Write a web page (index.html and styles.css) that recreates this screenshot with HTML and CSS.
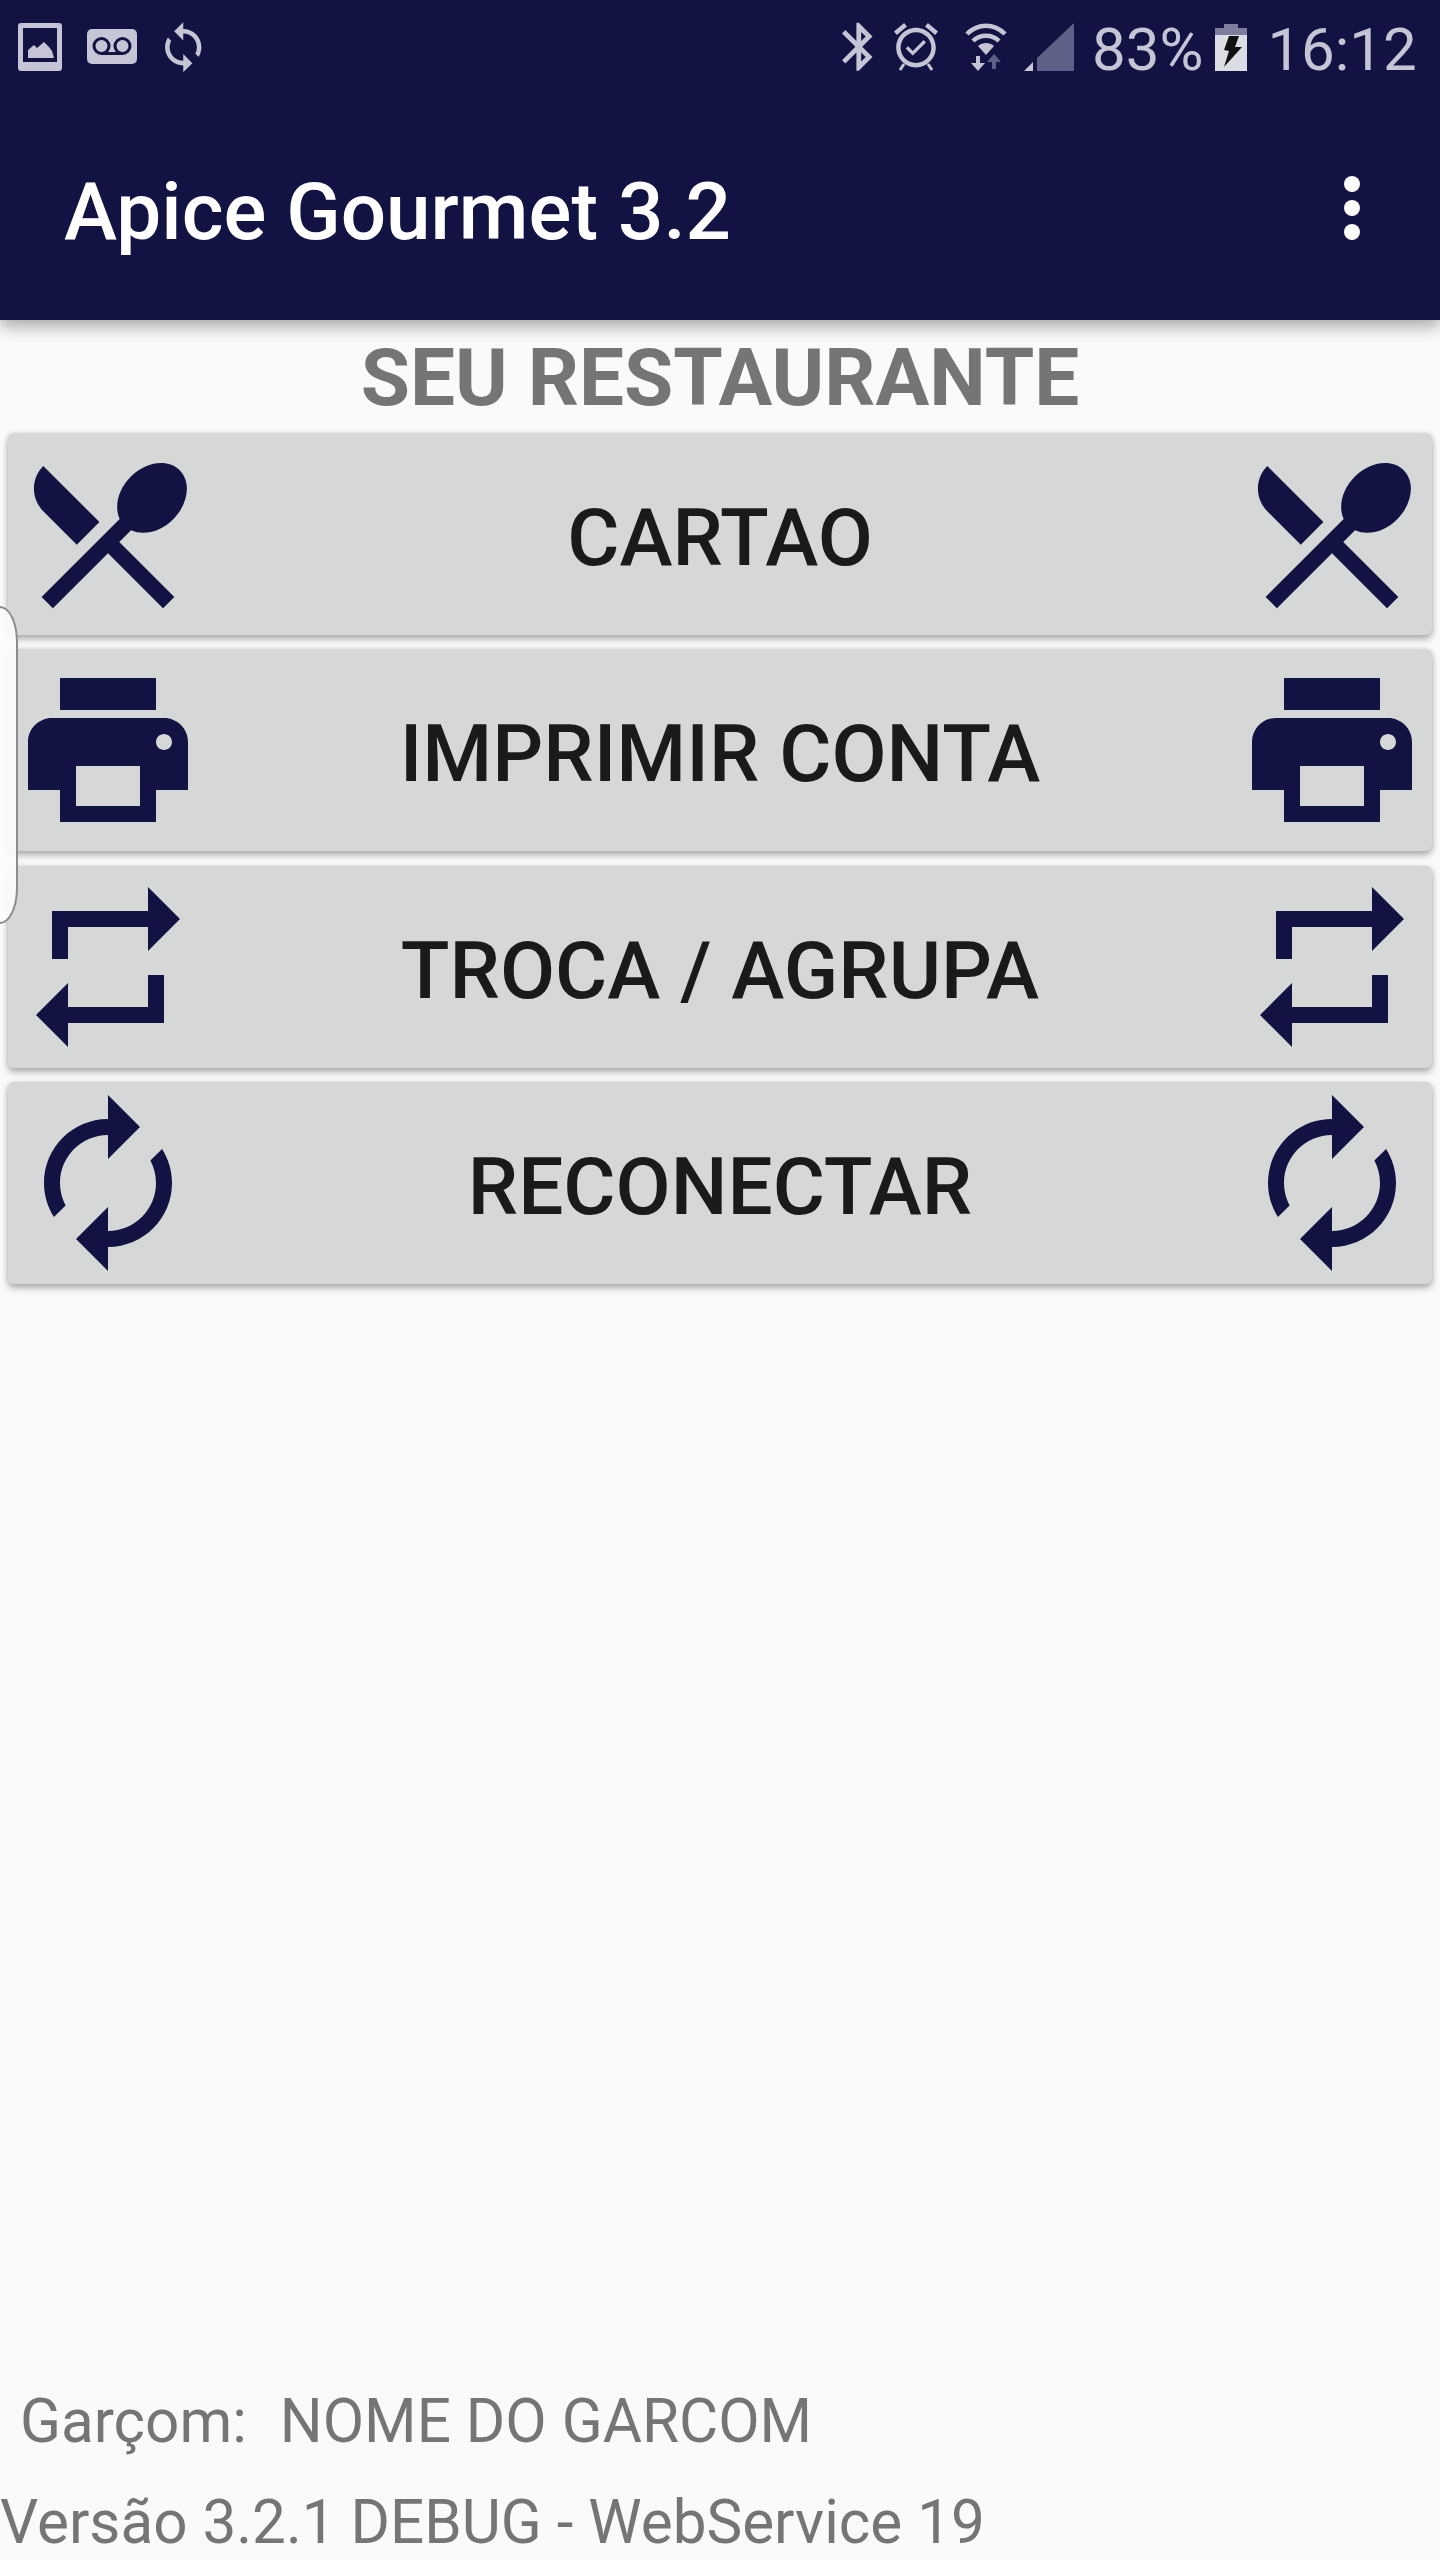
FILE: index.html
```html
<!DOCTYPE html>
<html lang="pt-BR">
<head>
  <meta charset="UTF-8">
  <meta name="viewport" content="width=device-width, initial-scale=1.0">
  <title>Apice Gourmet 3.2</title>
  <link rel="stylesheet" href="styles.css">
</head>
<body>
  <div class="page">
    <!-- barra superior -->
    <header class="header">
      <div class="status">
        <svg class="st-image" width="44" height="48" viewBox="18 23 44 48">
          <path fill="#c5c5d6" fill-rule="evenodd" d="M21 23h38a3 3 0 0 1 3 3v42a3 3 0 0 1-3 3H21a3 3 0 0 1-3-3V26a3 3 0 0 1 3-3zm2 5v34h34V28zm5 30v-8l6-5 3 3 7-6 5 5 3 4 2 7z"/>
        </svg>
        <svg class="st-voicemail" width="50" height="48" viewBox="87 23 50 48">
          <rect x="87" y="29" width="50" height="35" rx="5" fill="#c5c5d6"/>
          <g fill="none" stroke="#121342" stroke-width="3">
            <circle cx="101.500" cy="46" r="7.500"/>
            <circle cx="122.500" cy="46" r="7.500"/>
            <path d="M101.500 53.500h21"/>
          </g>
        </svg>
        <svg class="st-sync" width="40" height="54" viewBox="164 20 40 54">
          <g transform="translate(156 20) scale(2.27)">
            <path fill="#c5c5d6" d="M12 4V1L8 5l4 4V6c3.310 0 6 2.690 6 6 0 1.010-.25 1.970-.7 2.800l1.460 1.460C19.540 15.030 20 13.570 20 12c0-4.420-3.580-8-8-8zm0 14c-3.310 0-6-2.690-6-6 0-1.010.25-1.970.7-2.800L5.240 7.740C4.460 8.970 4 10.430 4 12c0 4.420 3.580 8 8 8v3l4-4-4-4v3z"/>
          </g>
        </svg>

        <svg class="st-bluetooth" width="36" height="52" viewBox="840 21 36 52">
          <g transform="translate(830 18) scale(2.4)">
            <path fill="#c5c5d6" d="M17.710 7.710L12 2h-1v7.590L6.410 5 5 6.410 10.590 12 5 17.590 6.410 19 11 14.410V22h1l5.710-5.710-4.300-4.290 4.300-4.290zM13 5.830l1.880 1.880L13 9.590V5.830zm1.880 10.460L13 18.170v-3.760l1.880 1.880z"/>
          </g>
        </svg>
        <svg class="st-alarm" width="46" height="52" viewBox="893 21 46 52">
          <g transform="translate(889.600 19) scale(2.200)">
            <path fill="#c5c5d6" d="M22 5.720l-4.600-3.860-1.290 1.530 4.600 3.860L22 5.720zM7.880 3.390L6.600 1.860 2 5.710l1.290 1.530 4.590-3.850zM12 4c-4.970 0-9 4.030-9 9s4.020 9 9 9c4.970 0 9-4.030 9-9s-4.030-9-9-9zm0 16c-3.870 0-7-3.130-7-7s3.130-7 7-7 7 3.130 7 7-3.130 7-7 7zm-1.460-5.470L8.410 12.400l-1.060 1.060 3.180 3.180 6-6-1.060-1.060-4.930 4.950z"/>
          </g>
          <path stroke="#c5c5d6" stroke-width="3" d="M904 64l-4 6M928 64l4 6"/>
        </svg>
        <svg class="st-wifi" width="44" height="52" viewBox="965 21 44 52">
          <g fill="none" stroke="#c5c5d6" stroke-width="4.500">
            <path d="M967 34c11-11 27-11 38 0"/>
            <path d="M973 41c7-7 19-7 26 0"/>
          </g>
          <path fill="#c5c5d6" d="M978 46c4-4 12-4 16 0l-8 9z"/>
          <path fill="#c5c5d6" d="M976 56h4v7h5l-7 8-7-8h5z"/>
          <path fill="#5f6088" d="M992 69v-7h-5l7-8 7 8h-5v7z"/>
        </svg>
        <svg class="st-signal" width="50" height="52" viewBox="1024 21 50 52">
          <path fill="#c5c5d6" d="M1024 71l9-9v9z"/>
          <path fill="#5f6088" d="M1037 58l37-35v48h-37z"/>
        </svg>
        <span class="st-text st-percent">83%</span>
        <svg class="st-battery" width="32" height="52" viewBox="1217 21 32 52">
          <path fill="#7d7d9c" d="M1226 24h14v4h9v7h-32v-7h9z"/>
          <path fill="#dcdce4" d="M1217 35h32v36h-32z"/>
          <path fill="#111" d="M1231 36h10l-4 11h7l-18 20 5-16-5-1z"/>
        </svg>
        <span class="st-text st-time">16:12</span>
      </div>

      <div class="appbar">
        <h1 class="title">Apice Gourmet 3.2</h1>
        <div class="overflow">
          <div class="dot"></div>
          <div class="dot"></div>
          <div class="dot"></div>
        </div>
      </div>
    </header>

    <h2 class="restaurant">SEU RESTAURANTE</h2>

    <!-- menu principal -->
    <div class="menu">
      <div class="btn">
        <svg class="btn-icon" viewBox="0 0 24 24"><path d="M8.100 13.340l2.830-2.830L3.910 3.500c-1.560 1.560-1.560 4.090 0 5.660l4.190 4.180zm6.780-1.810c1.530.71 3.680.21 5.270-1.380 1.910-1.910 2.280-4.650.81-6.120-1.460-1.460-4.200-1.100-6.120.81-1.590 1.590-2.090 3.740-1.380 5.270L3.700 19.870l1.410 1.410L12 14.410l6.880 6.880 1.410-1.410L13.410 13l1.470-1.470z"/></svg>
        <span class="btn-label">CARTAO</span>
        <svg class="btn-icon" viewBox="0 0 24 24"><path d="M8.100 13.340l2.830-2.830L3.910 3.500c-1.560 1.560-1.560 4.090 0 5.660l4.190 4.180zm6.780-1.810c1.530.71 3.680.21 5.270-1.380 1.910-1.910 2.280-4.650.81-6.120-1.460-1.460-4.200-1.100-6.120.81-1.590 1.590-2.090 3.740-1.380 5.270L3.700 19.870l1.410 1.410L12 14.410l6.880 6.880 1.410-1.410L13.410 13l1.470-1.470z"/></svg>
      </div>
      <div class="btn">
        <svg class="btn-icon" viewBox="0 0 24 24"><path d="M19 8H5c-1.660 0-3 1.340-3 3v6h4v4h12v-4h4v-6c0-1.660-1.340-3-3-3zm-3 11H8v-5h8v5zm3-7c-.55 0-1-.45-1-1s.45-1 1-1 1 .45 1 1-.45 1-1 1zm-1-9H6v4h12V3z"/></svg>
        <span class="btn-label">IMPRIMIR CONTA</span>
        <svg class="btn-icon" viewBox="0 0 24 24"><path d="M19 8H5c-1.660 0-3 1.340-3 3v6h4v4h12v-4h4v-6c0-1.660-1.340-3-3-3zm-3 11H8v-5h8v5zm3-7c-.55 0-1-.45-1-1s.45-1 1-1 1 .45 1 1-.45 1-1 1zm-1-9H6v4h12V3z"/></svg>
      </div>
      <div class="btn">
        <svg class="btn-icon" viewBox="0 0 24 24"><path d="M7 7h10v3l4-4-4-4v3H5v6h2V7zm10 10H7v-3l-4 4 4 4v-3h12v-6h-2v4z"/></svg>
        <span class="btn-label">TROCA / AGRUPA</span>
        <svg class="btn-icon" viewBox="0 0 24 24"><path d="M7 7h10v3l4-4-4-4v3H5v6h2V7zm10 10H7v-3l-4 4 4 4v-3h12v-6h-2v4z"/></svg>
      </div>
      <div class="btn">
        <svg class="btn-icon" viewBox="0 0 24 24"><path d="M12 6v3l4-4-4-4v3c-4.420 0-8 3.580-8 8 0 1.570.46 3.030 1.240 4.260L6.700 14.800c-.45-.83-.7-1.790-.7-2.800 0-3.310 2.690-6 6-6zm6.760 1.740L17.300 9.200c.44.84.7 1.790.7 2.800 0 3.310-2.690 6-6 6v-3l-4 4 4 4v-3c4.420 0 8-3.580 8-8 0-1.570-.46-3.030-1.240-4.260z"/></svg>
        <span class="btn-label">RECONECTAR</span>
        <svg class="btn-icon" viewBox="0 0 24 24"><path d="M12 6v3l4-4-4-4v3c-4.420 0-8 3.580-8 8 0 1.570.46 3.030 1.240 4.260L6.700 14.800c-.45-.83-.7-1.790-.7-2.800 0-3.310 2.690-6 6-6zm6.760 1.740L17.300 9.200c.44.84.7 1.790.7 2.800 0 3.310-2.690 6-6 6v-3l-4 4 4 4v-3c4.420 0 8-3.580 8-8 0-1.570-.46-3.030-1.240-4.260z"/></svg>
      </div>
    </div>

    <!-- rodape -->
    <div class="footer">
      <div class="waiter">
        <span class="waiter-label">Garçom:</span>
        <span>NOME DO GARCOM</span>
      </div>
      <div class="version">Versão 3.2.1 DEBUG - WebService 19</div>
    </div>

    <!-- alca do painel lateral -->
    <div class="edge-handle"></div>
  </div>
</body>
</html>
```

FILE: styles.css
```css
* {
  box-sizing: border-box;
  margin: 0;
  padding: 0;
}
body {
  font-family: Roboto, 'Liberation Sans', sans-serif;
  background-color: #fafafa;
}
.page {
  position: relative;
  display: flex;
  flex-direction: column;
  height: 2560px;
  overflow: hidden;
}

/* barra superior */
.header {
  position: relative;
  z-index: 2;
  height: 320px;
  background-color: #121342;
  box-shadow: 0 6px 16px rgba(0, 0, 0, 0.35);
}
.status {
  display: flex;
  align-items: center;
  height: 84px;
  padding-top: 10px;
  padding-left: 18px;
  color: #c5c5d6;
}
.status svg {
  flex: none;
}
.st-voicemail { margin-left: 25px; }
.st-sync { margin-left: 27px; }
.st-bluetooth { margin-left: 636px; }
.st-alarm { margin-left: 17px; }
.st-wifi { margin-left: 26px; }
.st-signal { margin-left: 15px; }
.st-battery { margin-left: 12px; }
.st-text {
  font-size: 60px;
  line-height: 60px;
  padding-top: 6px;
  white-space: nowrap;
}
.st-percent { margin-left: 18px; }
.st-time { margin-left: 20px; }

.appbar {
  display: flex;
  align-items: center;
  justify-content: space-between;
  height: 236px;
  padding: 12px 80px 0 64px;
}
.title {
  margin-top: 8px;
  font-size: 80px;
  font-weight: 500;
  color: #fff;
}
.overflow {
  display: flex;
  flex-direction: column;
  gap: 8px;
}
.dot {
  width: 16px;
  height: 16px;
  border-radius: 50%;
  background-color: #fff;
}

.restaurant {
  display: flex;
  align-items: center;
  justify-content: center;
  height: 113px;
  padding-top: 2px;
  font-size: 80px;
  font-weight: 700;
  color: #757575;
}

/* botoes */
.menu {
  display: flex;
  flex-direction: column;
  gap: 14.33px;
  padding: 0 8px;
}
.btn {
  display: flex;
  align-items: center;
  height: 202px;
  padding: 0 4px;
  border-radius: 6px;
  background-color: #d6d7d7;
  box-shadow: 0 4px 7px rgba(0, 0, 0, 0.3), 0 0 5px rgba(0, 0, 0, 0.1);
}
.btn-icon {
  flex: none;
  width: 192px;
  height: 192px;
  fill: #121342;
}
.btn-label {
  flex: 1;
  padding-top: 8px;
  text-align: center;
  font-size: 80px;
  font-weight: 500;
  color: #1a1a1a;
}

/* rodape */
.footer {
  margin-top: auto;
  font-size: 60.2px;
  color: #757575;
}
.waiter {
  display: flex;
  gap: 33px;
  padding-left: 20px;
  margin-bottom: 30px;
}
.version {
  margin-bottom: 2px;
  white-space: nowrap;
}

.edge-handle {
  position: absolute;
  left: -2px;
  top: 606px;
  width: 20px;
  height: 318px;
  border: 2px solid #8c8c8c;
  border-radius: 0 18px 18px 0 / 0 36px 36px 0;
  background-color: rgba(252, 252, 252, 0.92);
}
```
